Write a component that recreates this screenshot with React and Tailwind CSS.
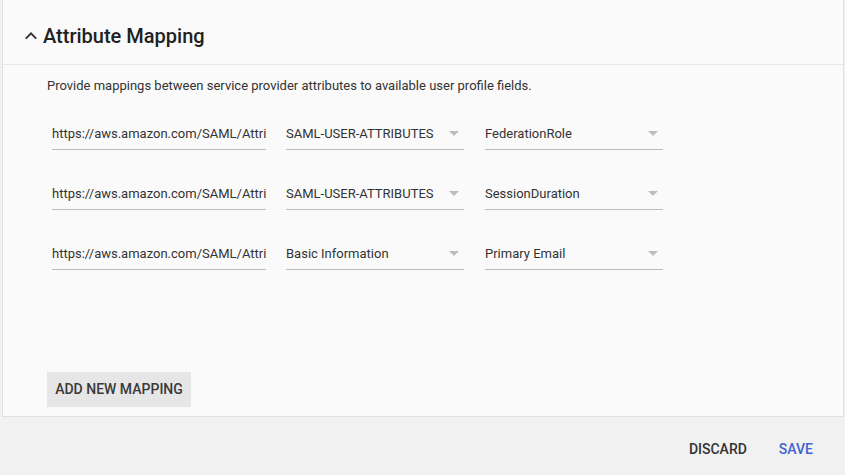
import React from "react";

const rows = [
  { url: "https://aws.amazon.com/SAML/Attributes/Role", source: "SAML-USER-ATTRIBUTES", field: "FederationRole" },
  { url: "https://aws.amazon.com/SAML/Attributes/RoleSessionName", source: "SAML-USER-ATTRIBUTES", field: "SessionDuration" },
  { url: "https://aws.amazon.com/SAML/Attributes/RoleSessionName", source: "Basic Information", field: "Primary Email" },
];

const Caret = () => (
  <svg width="10" height="5" viewBox="0 0 10 5" className="shrink-0">
    <path d="M0 0 L10 0 L5 5 Z" fill="#bdbdbd" />
  </svg>
);

const Select = ({ value }) => (
  <div className="flex h-[32px] w-[178px] items-center justify-between border-b border-[#bdbdbd] pr-[5px]">
    <span className="text-[13px] text-[#333]">{value}</span>
    <Caret />
  </div>
);

const App = () => {
  return (
    <div
      className="flex h-[475px] w-[845px] flex-col bg-[#f1f1f1]"
      style={{ fontFamily: "Roboto, 'Liberation Sans', sans-serif" }}
    >
      <div className="ml-[2px] mr-[1px] flex flex-col border-x border-b border-[#e0e0e0] bg-[#fafafa]">
        <div className="flex h-[65px] items-center border-b border-[#e6e6e6] pl-[19px] pt-[7px]">
          <svg width="18" height="18" viewBox="0 0 24 24" fill="none" stroke="#333" strokeWidth="2.6">
            <path d="M5 15.5 L12 8.5 L19 15.5" />
          </svg>
          <h2 className="ml-[3px] text-[20px] font-medium text-[#212121]">Attribute Mapping</h2>
        </div>

        <div className="flex flex-col px-[44px] pb-[9px] pt-[11px]">
          <p className="text-[13px] leading-[20px] text-[#333]">
            Provide mappings between service provider attributes to available user profile fields.
          </p>

          <div className="mt-[22px] flex flex-col gap-[28px] pl-[5px]">
            {rows.map((r, i) => (
              <div key={i} className="flex items-center gap-[20px]">
                <div className="h-[32px] w-[214px] overflow-hidden border-b border-[#bdbdbd]">
                  <input
                    readOnly
                    value={r.url}
                    className="h-full w-full bg-transparent text-[13px] text-[#333] outline-none"
                  />
                </div>
                <Select value={r.source} />
                <div className="ml-[1px]">
                  <Select value={r.field} />
                </div>
              </div>
            ))}
          </div>

          <button className="mt-[102px] h-[35px] w-[144px] bg-[#e6e6e6] text-[14px] font-medium text-[#3a3a3a]">
            ADD NEW MAPPING
          </button>
        </div>
      </div>

      <div className="flex flex-1 items-center justify-end pr-[16px] pt-[6px]">
        <button className="px-[16px] text-[14px] font-medium text-[#333]">DISCARD</button>
        <button className="px-[16px] text-[14px] font-medium text-[#3f63d2]">SAVE</button>
      </div>
    </div>
  );
};

export default App;
